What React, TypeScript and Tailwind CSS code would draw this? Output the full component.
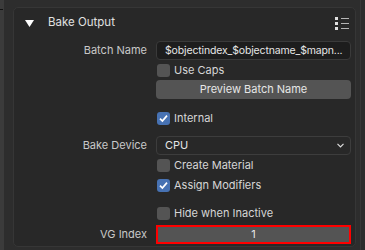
import React from 'react'

const font = { fontFamily: 'Inter, "Noto Sans", sans-serif' }

// Blender-style checkbox with label
const Check = ({ label, checked = false }: { label: string; checked?: boolean }) => (
  <div className="flex items-center h-[20px] pl-[1px]">
    <div
      className={
        checked
          ? 'w-[13px] h-[13px] rounded-[3px] bg-[#4772b3] flex items-center justify-center'
          : 'w-[13px] h-[13px] rounded-[3px] bg-[#545454]'
      }
    >
      {checked && (
        <svg width="11" height="11" viewBox="0 0 11 11">
          <path d="M2 5.6 L4.4 8 L9 2.6" fill="none" stroke="#ffffff" strokeWidth="1.7" />
        </svg>
      )}
    </div>
    <span className="ml-[4px] text-[11px] text-[#d6d6d6]">{label}</span>
  </div>
)

const Row = ({ label, children, className = '' }: { label?: string; children: React.ReactNode; className?: string }) => (
  <div className={`flex items-center ${className}`}>
    <div className="w-[134px] pr-[1px] text-right text-[11px] text-[#c8c8c8]">{label}</div>
    <div className="ml-[8px] w-[195px]">{children}</div>
  </div>
)

export default function App() {
  return (
    <div className="w-[365px] h-[250px] bg-[#2d2d2d] flex overflow-hidden" style={font}>
      {/* neighbouring editor edge */}
      <div className="w-[4px] h-full bg-[#3b3b3b] relative">
        <div className="absolute top-[9px] left-0 w-[3px] h-[1px] bg-[#111111]" />
      </div>

      <div className="pl-[9px] pt-[7px]">
        <div className="w-[343px] h-[240px] rounded-[5px] border border-[#363636] bg-[#282828]">
          {/* header */}
          <div className="h-[29px] flex items-center pt-[1px]">
            <svg className="ml-[11px]" width="9" height="7" viewBox="0 0 9 7">
              <path d="M0 0 H9 L4.5 7 Z" fill="#ffffff" />
            </svg>
            <span className="ml-[14px] text-[11.5px] text-[#e0e0e0]">Bake Output</span>
            <div className="ml-auto mr-[6px] flex flex-col gap-[2px]">
              {[0, 1, 2].map((i) => (
                <div key={i} className="flex items-center">
                  <div className="w-[3px] h-[3px] bg-[#e0e0e0]" />
                  <div className="ml-[3px] w-[8px] h-[1px] bg-[#b5b5b5]" />
                </div>
              ))}
            </div>
          </div>

          <Row label="Batch Name" className="mt-[4px]">
            <div className="h-[19px] rounded-[4px] bg-[#1d1d1d] border border-[#3a3a3a] flex items-center pl-[8px] text-[10.5px] tracking-[-0.15px] text-[#e6e6e6] whitespace-nowrap overflow-hidden">
              $objectindex_$objectname_$mapn...
            </div>
          </Row>
          <Row>
            <Check label="Use Caps" />
          </Row>
          <Row>
            <div className="h-[19px] rounded-[4px] bg-[#545454] flex items-center justify-center text-[11px] text-[#e6e6e6]">
              Preview Batch Name
            </div>
          </Row>

          <Row className="mt-[9px]">
            <Check label="Internal" checked />
          </Row>

          <Row label="Bake Device" className="mt-[8px]">
            <div className="h-[19px] rounded-[4px] bg-[#282828] border border-[#3d3d3d] flex items-center pl-[8px] pr-[6px] text-[11px] text-[#e6e6e6]">
              <span>CPU</span>
              <svg className="ml-auto" width="7" height="5" viewBox="0 0 7 5">
                <path d="M0.5 0.8 L3.5 3.8 L6.5 0.8" fill="none" stroke="#dddddd" strokeWidth="1.2" />
              </svg>
            </div>
          </Row>
          <Row>
            <Check label="Create Material" />
          </Row>
          <Row>
            <Check label="Assign Modifiers" checked />
          </Row>

          <Row className="mt-[8px]">
            <Check label="Hide when Inactive" />
          </Row>

          <Row label="VG Index" className="mt-[2px]">
            <div className="h-[19px] border-2 border-[#ff0000] bg-[#545454] flex items-center justify-center text-[11px] text-[#e6e6e6]">
              1
            </div>
          </Row>
        </div>
      </div>

      {/* right edge / scrollbar gutter */}
      <div className="ml-[4px] w-[1px] h-full bg-[#383838]" />
    </div>
  )
}
